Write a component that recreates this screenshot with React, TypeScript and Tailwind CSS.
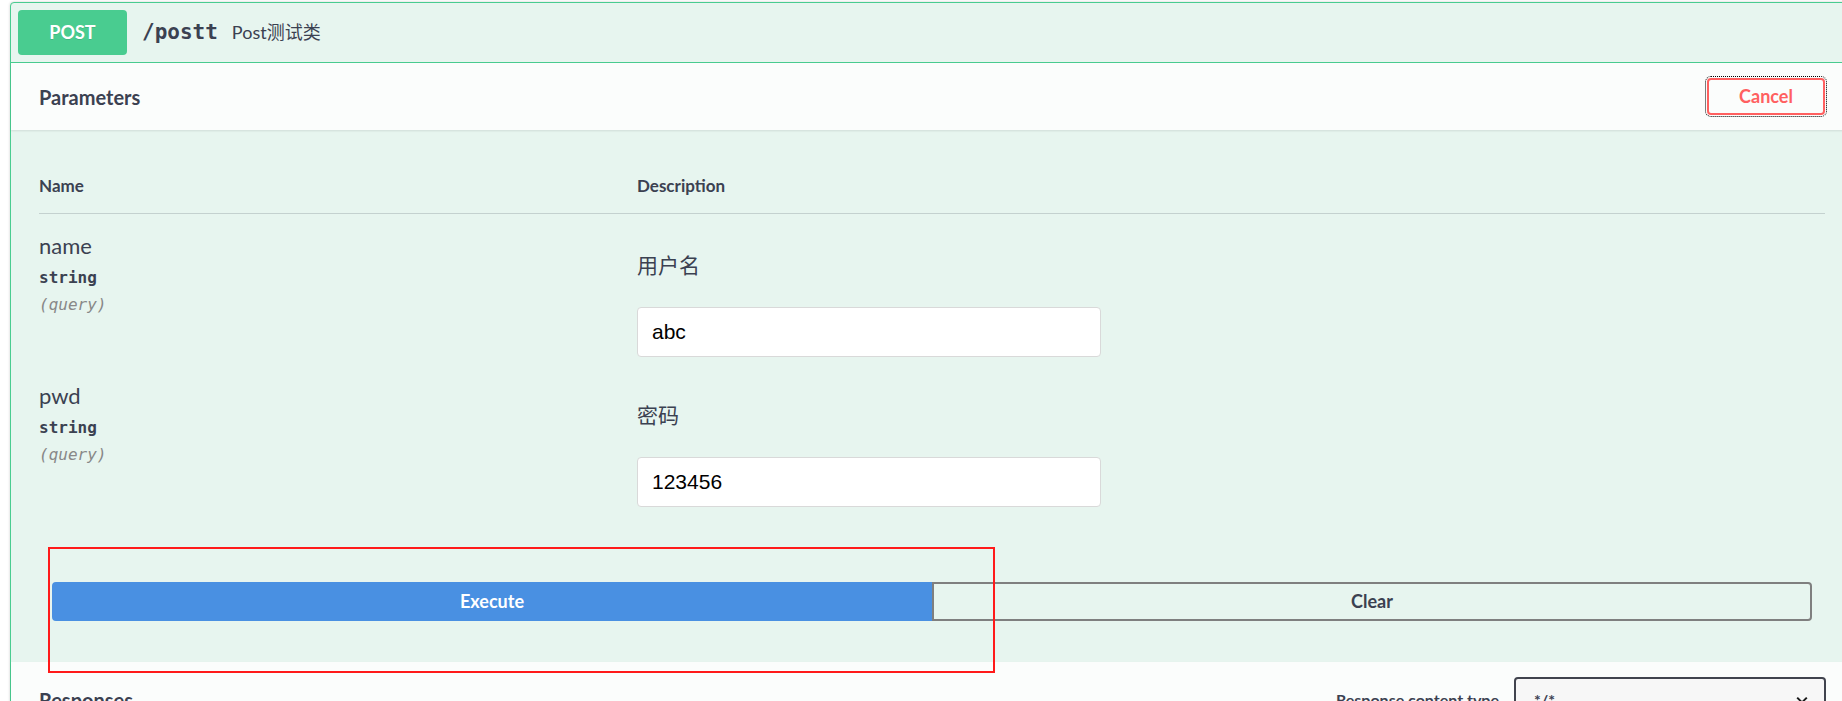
const params = [
  { name: 'name', type: 'string', location: 'query', description: '用户名', value: 'abc' },
  { name: 'pwd', type: 'string', location: 'query', description: '密码', value: '123456' },
]

export default function App() {
  return (
    <div className="relative min-h-screen overflow-hidden bg-white pt-[2px] text-[#3b4151]">
      <div className="ml-[10px] w-[1843px] rounded-[4px] border border-[#49cc90] bg-[#e7f5ef] shadow-[0_0_3px_rgba(0,0,0,0.19)]">
        {/* summary */}
        <div className="flex h-[60px] items-center border-b border-[#49cc90] px-[7px]">
          <span className="flex h-[45px] w-[109px] items-center justify-center rounded-[4px] bg-[#49cc90] font-[Lato,sans-serif] text-[18px] font-bold text-white [text-shadow:0_1px_0_rgba(0,0,0,0.1)]">
            POST
          </span>
          <span className="ml-[15px] font-['DejaVu_Sans_Mono',monospace] text-[21px] font-bold">/postt</span>
          <span className="ml-[14px] font-[Lato,'Noto_Sans_CJK_SC',sans-serif] text-[18px]">Post测试类</span>
        </div>

        {/* parameters header */}
        <div className="flex h-[67px] items-center justify-between bg-[#fbfdfc] pl-[28px] pr-[27px] shadow-[0_1px_2px_rgba(0,0,0,0.1)]">
          <h4 className="font-[Lato,sans-serif] text-[20px] font-bold">Parameters</h4>
          <button className="h-[37px] w-[118px] rounded-[4px] border-2 border-[#ff6060] font-[Lato,sans-serif] text-[18px] font-bold text-[#ff6060] outline-1 outline-offset-1 outline-black outline-dotted">
            Cancel
          </button>
        </div>

        <div className="pl-[28px] pr-[27px]">
          <div className="grid grid-cols-[598px_1fr] border-b border-[rgba(59,65,81,0.2)] pt-[44px] pb-[15px] font-[Lato,sans-serif] text-[17px] font-bold leading-[24px]">
            <div>Name</div>
            <div>Description</div>
          </div>

          {params.map((p) => (
            <div key={p.name} className="grid grid-cols-[598px_1fr] items-start">
              <div className="pt-[17px]">
                <div className="font-[Lato,sans-serif] text-[22px] leading-[30px]">{p.name}</div>
                <div className="mt-[6px] font-['DejaVu_Sans_Mono',monospace] text-[16px] font-semibold leading-[22px]">{p.type}</div>
                <div className="mt-[5px] font-['DejaVu_Sans_Mono',monospace] text-[16px] italic leading-[22px] text-[#888]">
                  ({p.location})
                </div>
              </div>
              <div className="pt-[36px] pb-[7px]">
                <p className="font-['Noto_Sans_CJK_SC',sans-serif] text-[21px] leading-[28px]">{p.description}</p>
                <input
                  defaultValue={p.value}
                  className="mt-[29px] block h-[50px] w-[464px] rounded-[4px] border border-[#d9d9d9] bg-white px-[14px] font-['Liberation_Sans',sans-serif] text-[21px] text-black outline-none"
                />
              </div>
            </div>
          ))}

          <div className="flex px-[13px] pt-[68px] pb-[41px]">
            <button className="h-[39px] flex-1 rounded-l-[4px] border-2 border-[#4990e2] bg-[#4990e2] font-[Lato,sans-serif] text-[18px] font-bold text-white">
              Execute
            </button>
            <button className="h-[39px] flex-1 rounded-r-[4px] border-2 border-[#7f7f7f] font-[Lato,sans-serif] text-[18px] font-bold text-[#3b4151]">
              Clear
            </button>
          </div>
        </div>

        {/* responses header */}
        <div className="flex items-center justify-between bg-[#fbfdfc] pt-[15px] pb-[15px] pl-[28px] pr-[26px] shadow-[0_1px_2px_rgba(0,0,0,0.1)]">
          <h4 className="font-[Lato,sans-serif] text-[20px] font-bold">Responses</h4>
          <div className="flex items-center">
            <span className="mr-[15px] font-[Lato,sans-serif] text-[16px] font-bold">Response content type</span>
            <div className="flex h-[45px] w-[312px] items-center justify-between rounded-[4px] border-2 border-[#41444e] bg-[#f7f7f7] pl-[18px] pr-[14px] font-[Lato,sans-serif] text-[16px] font-bold">
              <span>*/*</span>
              <svg width="16" height="16" viewBox="0 0 20 20">
                <path d="M4 7l6 6 6-6" fill="none" stroke="#1a1a1a" strokeWidth="2.5" />
              </svg>
            </div>
          </div>
        </div>
        <div className="h-[200px]" />
      </div>

      {/* annotation box */}
      <div className="pointer-events-none absolute top-[547px] left-[48px] h-[126px] w-[947px] border-2 border-[#ff1a1a]" />
    </div>
  )
}
